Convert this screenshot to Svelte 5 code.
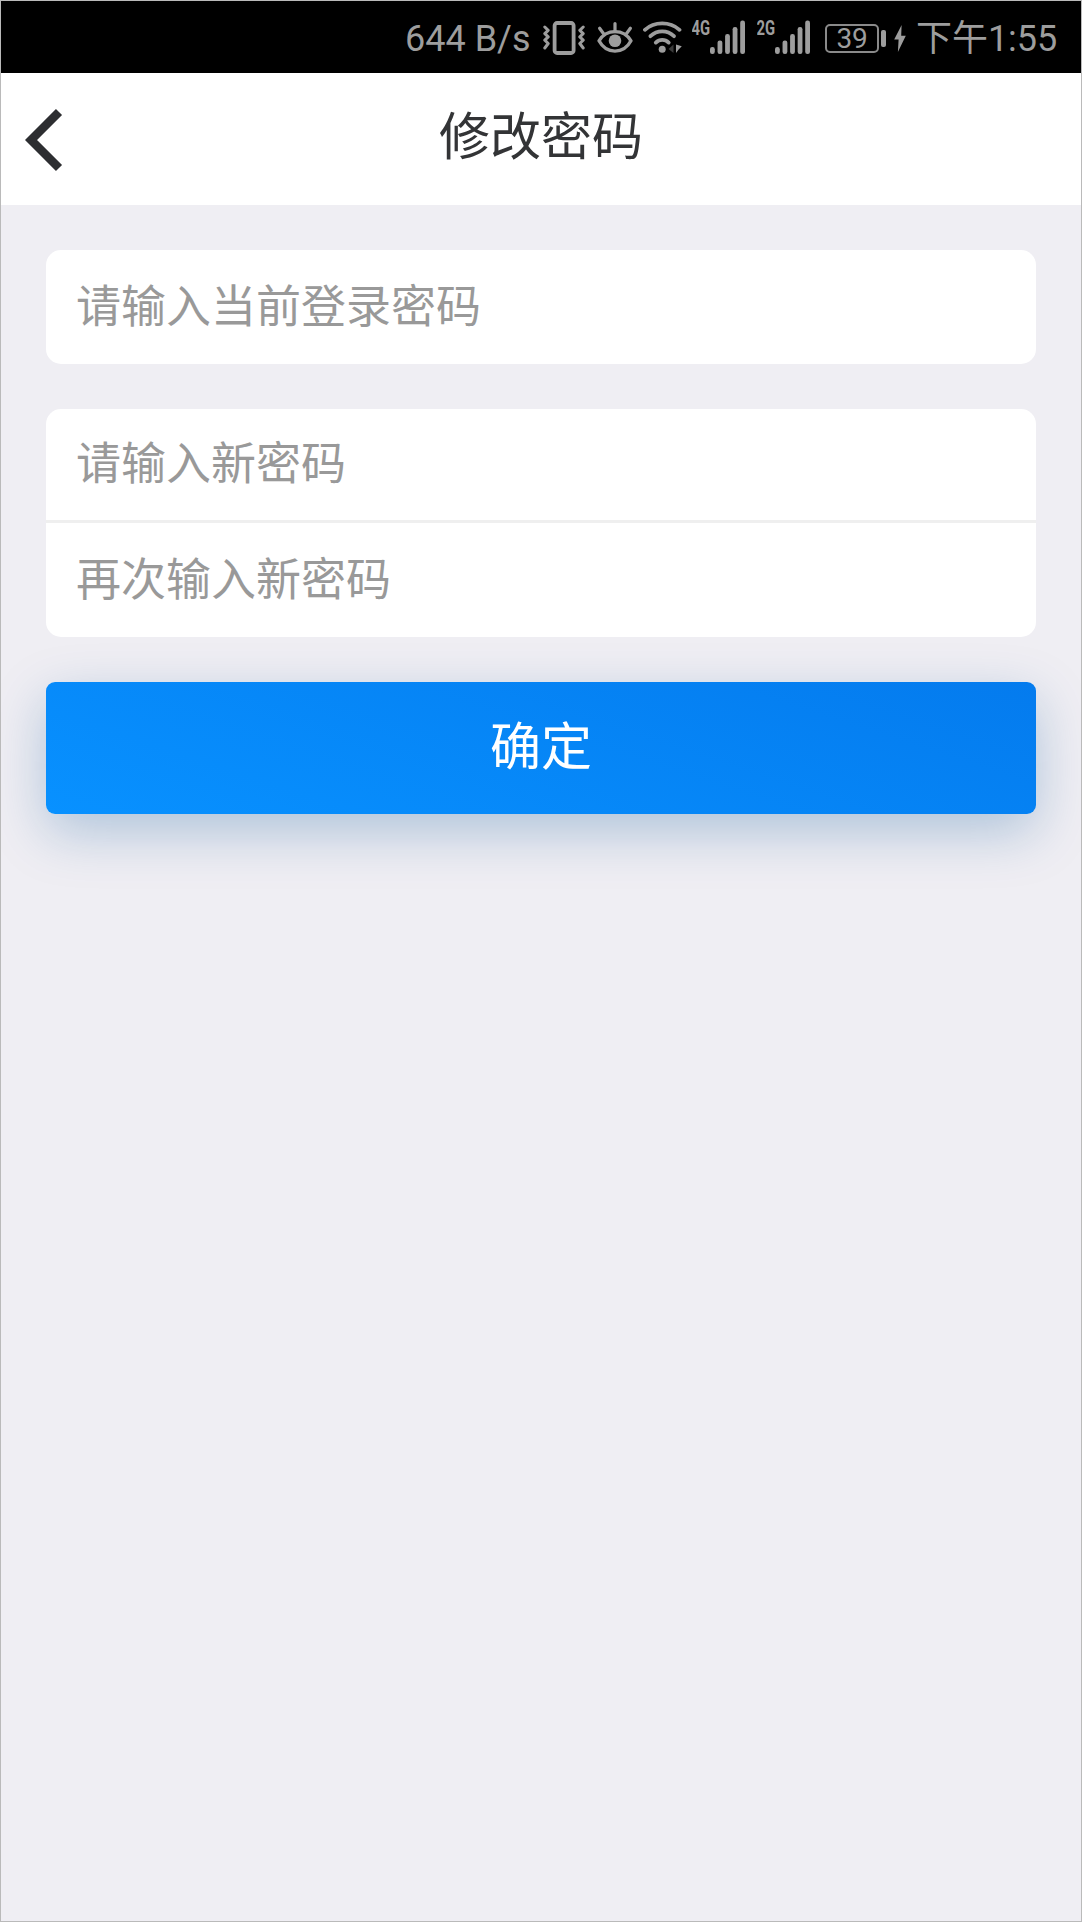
<script lang="ts">
  type Signal = {
    label: string;
    bars: number[];
  };

  const signals: Signal[] = [
    { label: '4G', bars: [7, 13.5, 20, 27, 33.5] },
    { label: '2G', bars: [7, 13.5, 20, 27, 33.5] },
  ];

  let current = $state('');
  let next = $state('');
  let repeat = $state('');
</script>

<div class="screen">
  <div class="status-bar">
    <span class="speed">644 B/s</span>

    <svg class="vibrate" width="42" height="34" viewBox="0 0 42 34">
      <rect x="11.6" y="2" width="19" height="30" rx="2.5" stroke-width="3.8" />
      <path d="M1.8 6l3.4 3.3-3.4 3.3 3.4 3.3-3.4 3.3 3.4 3.3-3.4 4.5" stroke-width="3" />
      <path d="M40.2 6l-3.4 3.3 3.4 3.3-3.4 3.3 3.4 3.3-3.4 3.3 3.4 4.5" stroke-width="3" />
    </svg>

    <svg class="eye" width="36" height="32" viewBox="0 0 36 32">
      <path d="M2 18.8C9.5 6.6 26.5 6.6 34 18.8C26.5 32.6 9.5 32.6 2 18.8z" stroke-width="3.4" />
      <path d="M18 1.6v8M2.6 6.2l4 5.6M33.4 6.2l-4 5.6" stroke-width="3.2" />
      <circle class="solid" cx="18" cy="18.8" r="6.3" />
    </svg>

    <svg class="wifi" width="39" height="34" viewBox="0 0 39 34">
      <path d="M1.9 8.8C11.5 .2 26.8 .2 36.5 8.8" stroke-width="3.8" />
      <path d="M7.4 15.2C14.2 8.8 24.2 8.8 31 15.2" stroke-width="3.8" />
      <path d="M12.8 21.6C16.5 18 22 18 25.7 21.6" stroke-width="3.8" />
      <circle class="solid" cx="19.2" cy="28.3" r="3.5" />
      <path class="solid dim" d="M25.5 28l5-4.5v8.5z" />
      <path class="solid" d="M33 23.5v8.5l2.4-3.2 3.4-3.6z" />
    </svg>

    {#each signals as signal}
      <svg class="signal" width="54" height="42" viewBox="0 -8 54 42">
        <text x="-.4" y="14" textLength="18.6" lengthAdjust="spacingAndGlyphs">{signal.label}</text>
        {#each signal.bars as height, i}
          <rect class="solid" x={18 + i * 7.55} y={33 - height} width="4.8" {height} rx="2.2" />
        {/each}
      </svg>
    {/each}

    <div class="battery">39</div>
    <div class="battery-cap"></div>

    <svg class="bolt" width="12" height="27" viewBox="0 0 12 27">
      <path class="solid" d="M7.6 0L.2 14.6h4.4L3.9 27 11.8 10.8H7.2z" />
    </svg>

    <span class="time">下午1:55</span>
  </div>

  <header class="nav">
    <button class="back" aria-label="返回">
      <svg width="38" height="64" viewBox="0 0 38 64">
        <path d="M34 4L6 32L34 60" />
      </svg>
    </button>
    <h1>修改密码</h1>
  </header>

  <main>
    <div class="card">
      <input placeholder="请输入当前登录密码" bind:value={current} />
    </div>

    <div class="card">
      <input class="divided" placeholder="请输入新密码" bind:value={next} />
      <input placeholder="再次输入新密码" bind:value={repeat} />
    </div>

    <button class="submit">确定</button>
  </main>
</div>

<style>
  :global(body) {
    margin: 0;
  }

  .screen {
    box-sizing: border-box;
    width: 1082px;
    height: 1922px;
    overflow: hidden;
    border: 1px solid #bababa;
    background: #efeef3;
    font-family: Roboto, 'Noto Sans CJK SC', sans-serif;
  }

  .status-bar {
    display: flex;
    align-items: center;
    box-sizing: border-box;
    height: 72px;
    padding-left: 404px;
    background: #000;
    color: #9d9d9d;
    font-size: 36px;
    line-height: 72px;
    white-space: nowrap;
  }

  .status-bar svg {
    flex: none;
    fill: none;
    stroke: #9d9d9d;
    stroke-linecap: round;
    stroke-linejoin: round;
  }

  .status-bar .solid {
    fill: #9d9d9d;
    stroke: none;
  }

  .status-bar .dim {
    fill: #3a3a3a;
  }

  .speed {
    width: 138px;
    margin-top: 4px;
  }

  .vibrate {
    margin: 1px 12px 0 0;
  }

  .eye {
    margin: 2px 10px 0 0;
  }

  .wifi {
    margin: 2px 10px 0 0;
  }

  .signal {
    margin: -6px 11.2px 0 0;
  }

  .status-bar text {
    fill: #9d9d9d;
    stroke: none;
    font-size: 21px;
    font-weight: 700;
  }

  .battery {
    box-sizing: border-box;
    width: 54.5px;
    height: 29px;
    margin: 2px 2px 0 2.5px;
    border: 2px solid #8a8a8a;
    border-radius: 5px;
    font-size: 28px;
    line-height: 26px;
    text-align: center;
  }

  .battery-cap {
    width: 4.5px;
    height: 17px;
    margin: 3px 8px 0 0;
    border-radius: 2px;
    background: #9d9d9d;
  }

  .bolt {
    margin: 3px 10px 0 0;
  }

  .time {
    margin-top: 4px;
  }

  .nav {
    display: grid;
    grid-template-columns: 120px 1fr 120px;
    height: 132px;
    background: #fff;
  }

  .back {
    display: flex;
    align-items: center;
    padding: 2px 0 0 24px;
    border: 0;
    background: none;
  }

  .back path {
    fill: none;
    stroke: #2d2e31;
    stroke-width: 8.6;
  }

  h1 {
    margin: 0;
    color: #333436;
    font-size: 51px;
    font-weight: 400;
    line-height: 130px;
    text-align: center;
  }

  main {
    display: flex;
    flex-direction: column;
    gap: 45px;
    padding: 45px;
  }

  .card {
    overflow: hidden;
    border-radius: 15px;
    background: #fff;
  }

  input {
    display: block;
    box-sizing: border-box;
    width: 100%;
    height: 114px;
    padding: 0 30px;
    border: 0;
    outline: 0;
    background: none;
    color: #333436;
    font: inherit;
    font-size: 45px;
  }

  input::placeholder {
    color: #999;
    opacity: 1;
  }

  .divided {
    border-bottom: 3px solid #efefef;
  }

  .submit {
    height: 132px;
    padding: 0 0 10px;
    border: 0;
    border-radius: 9px;
    background: linear-gradient(18deg, #0891ff, #047bee);
    box-shadow: 0 18px 54px rgba(0, 83, 150, 0.27);
    color: #fff;
    font: inherit;
    font-size: 51px;
  }
</style>
